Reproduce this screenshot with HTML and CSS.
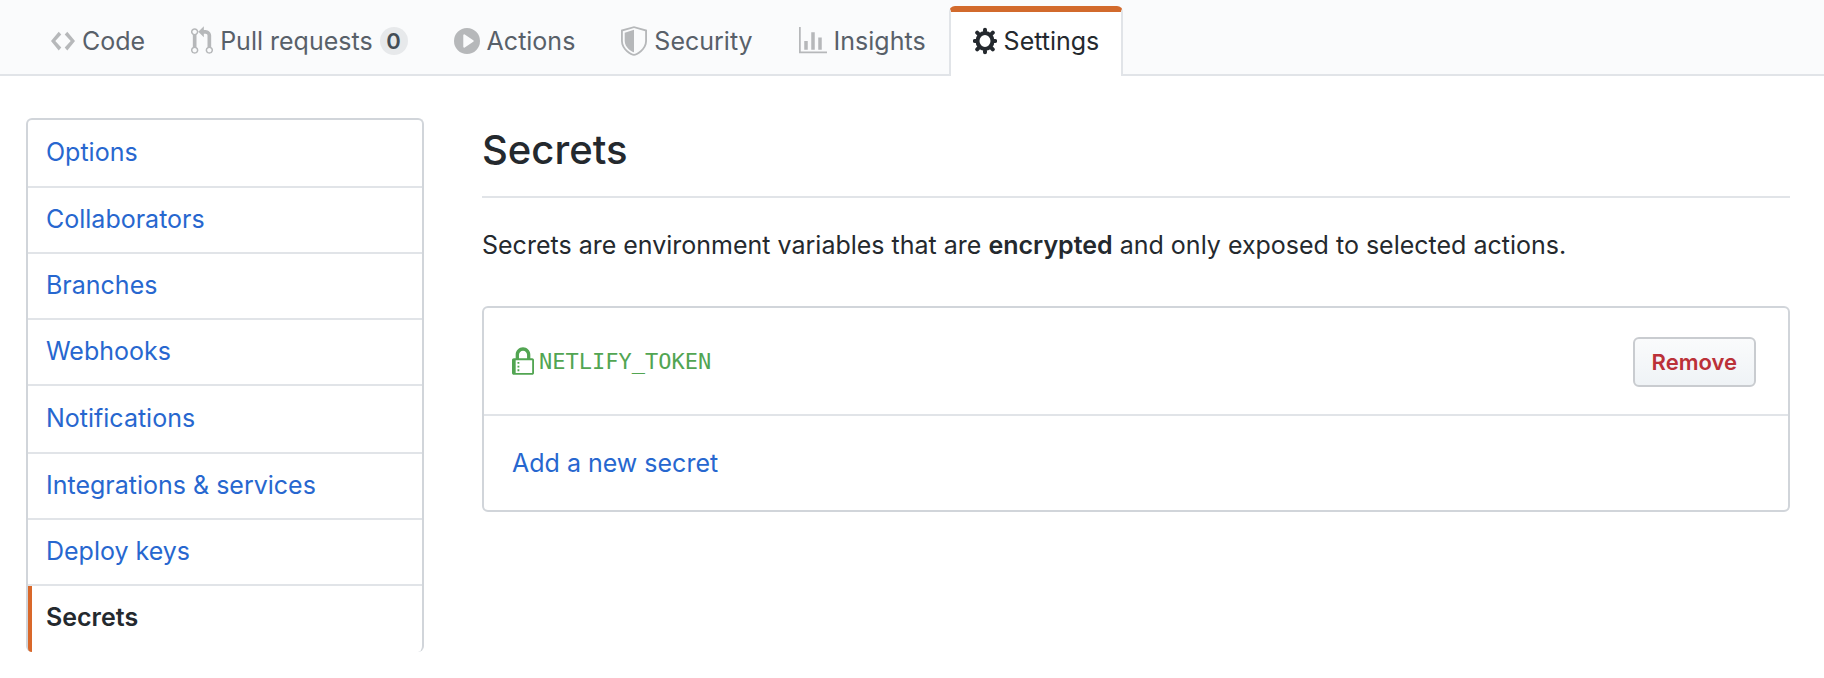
FILE: index.html
```html
<!DOCTYPE html>
<html lang="en">
<head>
<meta charset="utf-8">
<title>Secrets</title>
<meta name="viewport" content="width=device-width, initial-scale=1">
<link rel="stylesheet" href="styles.css">
</head>
<body>
<nav class="tabs" aria-label="Repository">
  <a class="tab" href="#code"><svg class="icon icon-narrow" viewBox="0 0 14 16" preserveAspectRatio="none" aria-hidden="true"><path d="M9.5 3L8 4.5 11.5 8 8 11.5 9.5 13 14 8 9.5 3zm-5 0L0 8l4.5 5L6 11.5 2.5 8 6 4.5 4.5 3z"/></svg>Code</a>
  <a class="tab" href="#pulls"><svg class="icon icon-small" viewBox="0 0 12 16" aria-hidden="true"><path fill-rule="evenodd" d="M11 11.28V5c-.03-.78-.34-1.47-.94-2.06C9.46 2.35 8.78 2.03 8 2H7V0L4 3l3 3V4h1c.27.02.48.11.69.31.21.2.3.42.31.69v6.28A1.993 1.993 0 0 0 10 15a1.993 1.993 0 0 0 1-3.72zm-1 2.92c-.66 0-1.2-.55-1.2-1.2 0-.65.55-1.2 1.2-1.2.65 0 1.2.55 1.2 1.2 0 .65-.55 1.2-1.2 1.2zM4 3c0-1.11-.89-2-2-2a1.993 1.993 0 0 0-1 3.72v6.56A1.993 1.993 0 0 0 2 15a1.993 1.993 0 0 0 1-3.72V4.72c.59-.34 1-.98 1-1.72zm-.8 10c0 .66-.55 1.2-1.2 1.2-.65 0-1.2-.55-1.2-1.2 0-.65.55-1.2 1.2-1.2.65 0 1.2.55 1.2 1.2zM2 4.2C1.34 4.2.8 3.65.8 3c0-.65.55-1.2 1.2-1.2.65 0 1.2.55 1.2 1.2 0 .65-.55 1.2-1.2 1.2z"/></svg>Pull requests<span class="counter">0</span></a>
  <a class="tab" href="#actions"><svg class="icon" viewBox="0 0 14 16" aria-hidden="true"><path fill-rule="evenodd" d="M14 8A7 7 0 1 1 0 8a7 7 0 0 1 14 0zm-8.223 3.482l4.599-3.066a.5.5 0 0 0 0-.832L5.777 4.518A.5.5 0 0 0 5 4.934v6.132a.5.5 0 0 0 .777.416z"/></svg>Actions</a>
  <a class="tab" href="#security"><svg class="icon" viewBox="0 0 14 16" aria-hidden="true"><path fill-rule="evenodd" d="M0 2l7-2 7 2v6.02C14 12.69 8.69 16 7 16c-1.69 0-7-3.31-7-7.98V2zm1 .75L7 1l6 1.75v5.268C13 12.104 8.449 15 7 15c-1.449 0-6-2.896-6-6.982V2.75zm1 .75L7 2v12c-1.207 0-5-2.482-5-5.985V3.5z"/></svg>Security</a>
  <a class="tab" href="#insights"><svg class="icon icon-wide" viewBox="0 0 16 16" aria-hidden="true"><path d="M16 14v1H0V0h1v14h15zM5 13H3V8h2v5zm4 0H7V3h2v10zm4 0h-2V6h2v7z"/></svg>Insights</a>
  <a class="tab tab-selected" href="#settings" aria-current="page"><svg class="icon icon-narrow" viewBox="0 0 24 30" aria-hidden="true"><ellipse class="gear-ring" cx="12" cy="15" rx="7.5" ry="8"/><path class="gear-teeth" d="M12 5v-1.2M12 25v1.2M3 15h-1.2M21 15h1.2M5.4 7.9l-1.2-1.2M18.6 7.9l1.2-1.2M5.4 22.1l-1.2 1.2M18.6 22.1l1.2 1.2"/></svg>Settings</a>
</nav>
<div class="layout">
  <nav class="menu" aria-label="Settings">
    <a class="menu-item" href="#options">Options</a>
    <a class="menu-item" href="#collaborators">Collaborators</a>
    <a class="menu-item" href="#branches">Branches</a>
    <a class="menu-item" href="#webhooks">Webhooks</a>
    <a class="menu-item" href="#notifications">Notifications</a>
    <a class="menu-item" href="#integrations">Integrations &amp; services</a>
    <a class="menu-item" href="#keys">Deploy keys</a>
    <a class="menu-item menu-item-selected" href="#secrets" aria-current="page">Secrets</a>
  </nav>
  <main class="content">
    <h1 class="title">Secrets</h1>
    <p class="intro">Secrets are environment variables that are <strong>encrypted</strong> and only exposed to selected actions.</p>
    <div class="box">
      <div class="box-row secret">
        <svg class="icon icon-small" viewBox="0 0 12 16" aria-hidden="true"><path fill-rule="evenodd" d="M4 13H3v-1h1v1zm8-6v7c0 .55-.45 1-1 1H1c-.55 0-1-.45-1-1V7c0-.55.45-1 1-1h1V4c0-2.2 1.8-4 4-4s4 1.8 4 4v2h1c.55 0 1 .45 1 1zM3.8 6h4.41V4c0-1.22-.98-2.2-2.2-2.2-1.22 0-2.2.98-2.2 2.2v2H3.8zM11 7H2v7h9V7zM4 8H3v1h1V8zm0 2H3v1h1v-1z"/></svg>
        <code class="secret-name">NETLIFY_TOKEN</code>
        <button class="button" type="button">Remove</button>
      </div>
      <div class="box-row"><a class="link" href="#new">Add a new secret</a></div>
    </div>
  </main>
</div>
</body>
</html>
```
FILE: styles.css
```css
* {
  box-sizing: border-box;
}

body {
  margin: 0;
  background: #fff;
  color: #24292e;
  font: 25px/36px Inter, "Liberation Sans", sans-serif;
}

a {
  text-decoration: none;
}

.icon {
  flex: none;
  width: 26px;
  height: 30px;
  fill: currentColor;
}

.icon-narrow {
  width: 24px;
}

.icon-small {
  width: 22px;
}

.icon-wide {
  width: 28px;
}

.gear-ring {
  fill: none;
  stroke: currentColor;
  stroke-width: 4;
}

.gear-teeth {
  fill: none;
  stroke: currentColor;
  stroke-width: 4;
  stroke-linecap: round;
}

/* Repository tabs */
.tabs {
  display: flex;
  padding: 6px 28px 0;
  border-bottom: 2px solid #e1e4e8;
  background: #fafbfc;
}

.tab {
  display: flex;
  align-items: center;
  gap: 7px;
  height: 70px;
  margin-bottom: -2px;
  padding: 0 21px 6px;
  border: 2px solid transparent;
  border-top: 6px solid transparent;
  border-bottom: 0;
  border-radius: 6px 6px 0 0;
  color: #586069;
  white-space: nowrap;
}

.tab .icon {
  color: #b6b8ba;
}

.tab-selected {
  padding: 0 22px 6px;
  border-color: #d26a2c #e1e4e8 transparent;
  background: #fff;
  color: #24292e;
}

.tab-selected .icon {
  color: inherit;
}

.counter {
  min-width: 28px;
  border-radius: 14px;
  background: #e7e9eb;
  color: #444d56;
  font-size: 22px;
  font-weight: 600;
  line-height: 28px;
  text-align: center;
}

/* Page body */
.layout {
  display: flex;
  align-items: flex-start;
  gap: 58px;
  padding: 42px 34px 24px 26px;
}

.menu {
  flex: none;
  width: 398px;
  border: 2px solid #d1d5da;
  border-bottom: 0;
  border-radius: 6px;
}

.menu-item {
  display: block;
  padding: 13px 18px 15px;
  border-bottom: 2px solid #e1e4e8;
  color: #2767cf;
}

.menu-item:nth-child(4n + 1) {
  line-height: 38px;
}

.menu-item-selected {
  position: relative;
  border-bottom-color: transparent;
  color: #24292e;
  font-weight: 600;
}

.menu-item-selected::before {
  content: "";
  position: absolute;
  top: 0;
  bottom: -2px;
  left: 0;
  width: 4px;
  border-radius: 0 0 0 4px;
  background: #d9682a;
}

.content {
  flex: 1;
  min-width: 0;
}

.title {
  margin: 0 0 29px;
  padding: 4px 0 18px;
  border-bottom: 2px solid #e1e4e8;
  font-size: 40px;
  font-weight: 500;
  line-height: 56px;
}

.intro {
  margin: 0 0 43px;
}

.intro strong {
  font-weight: 600;
}

.box {
  border: 2px solid #d1d5da;
  border-radius: 6px;
}

.box-row {
  padding: 29px 32px 29px 28px;
}

.box-row + .box-row {
  border-top: 2px solid #e1e4e8;
}

.secret {
  display: flex;
  align-items: center;
  gap: 5px;
  padding-bottom: 27px;
  color: #52a552;
}

.secret-name {
  font: 22px/36px "DejaVu Sans Mono", monospace;
}

.button {
  margin-left: auto;
  padding: 6px 17px;
  border: 2px solid #c9ccd0;
  border-radius: 6px;
  background: linear-gradient(#fafbfc, #eff3f6);
  color: #bb3138;
  font: 600 22px/34px Inter, "Liberation Sans", sans-serif;
}

.link {
  color: #2767cf;
}
```
